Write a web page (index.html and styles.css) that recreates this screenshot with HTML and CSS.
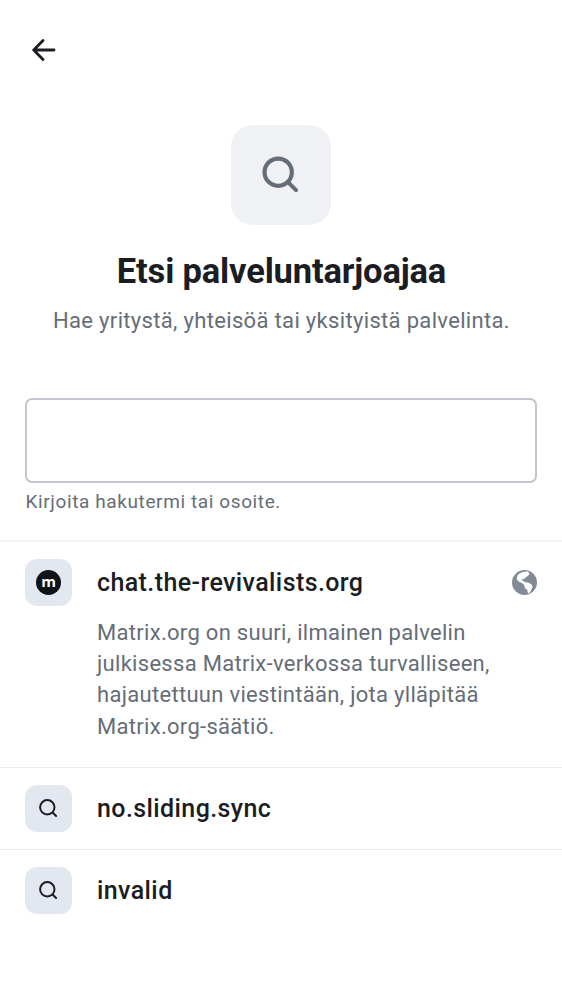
FILE: index.html
```html
<!DOCTYPE html>
<html lang="fi">
<head>
<meta charset="utf-8">
<title>Etsi palveluntarjoajaa</title>
<link rel="stylesheet" href="styles.css">
</head>
<body>
<header class="topbar">
<svg class="back" viewBox="0 0 24 24" fill="none" stroke="currentColor" stroke-width="2.8" stroke-linecap="round" stroke-linejoin="round"><path d="M22 12H2M11 2.600 1.700 12l9.300 9.400"/></svg>
</header>
<section class="hero">
<div class="hero-icon"><svg viewBox="0 0 40 40" fill="none" stroke="currentColor" stroke-width="4.300" stroke-linecap="round"><circle cx="16.600" cy="16.600" r="14"/><path d="m27.200 27.300 7.700 7.700"/></svg></div>
<h1 class="title">Etsi palveluntarjoajaa</h1>
<p class="subtitle">Hae yritystä, yhteisöä tai yksityistä palvelinta.</p>
</section>
<div class="field">
<input class="input" type="text" aria-label="Palvelin">
<p class="hint">Kirjoita hakutermi tai osoite.</p>
</div>
<main>
<article class="provider first">
<div class="badge"><span class="logo">m</span></div>
<div class="info">
<div class="name-row"><h2 class="name">chat.the-revivalists.org</h2>
<svg class="globe" viewBox="0 0 25 25"><circle cx="12.500" cy="12.500" r="12.500" fill="currentColor"/><path fill="#fff" d="M11.500 1.700 16 1.500l1.500 2-1.200 2.200-2.300 1.200-1.500 1.800-2.200.2-.2 1.800 2 .2.700 1.700 3.200-.3 3.500 2.100 1.200 2.600-1.300 2.300-1.200 3-2.200 1.300-.7-3.600-2.500-2-.4-3-2.600-2L6.600 11.500 4.800 9.300l.5-3.500 2.400-2.500z"/></svg></div>
<p class="description">Matrix.org on suuri, ilmainen palvelin julkisessa Matrix-verkossa turvalliseen, hajautettuun viestintään, jota ylläpitää Matrix.org-säätiö.</p>
</div>
</article>
<article class="provider">
<div class="badge"><svg class="search" viewBox="0 0 20 20" fill="none" stroke="currentColor" stroke-width="2" stroke-linecap="round"><circle cx="9.300" cy="8.300" r="7.200"/><path d="m14.600 13.500 3.500 3.500"/></svg></div>
<h2 class="name">no.sliding.sync</h2>
</article>
<article class="provider">
<div class="badge"><svg class="search" viewBox="0 0 20 20" fill="none" stroke="currentColor" stroke-width="2" stroke-linecap="round"><circle cx="9.300" cy="8.300" r="7.200"/><path d="m14.600 13.500 3.500 3.500"/></svg></div>
<h2 class="name">invalid</h2>
</article>
</main>
</body>
</html>
```
FILE: styles.css
```css
* { box-sizing: border-box; }
body { margin: 0; min-height: 1000px; background: #fff; color: #1b1d22; font-family: Roboto, sans-serif; }
h1, h2, p { margin: 0; }
svg { display: block; }
.topbar { height: 100px; padding: 38px 0 0 32px; }
.back { width: 24px; height: 24px; }
.hero { height: 298px; padding-top: 25px; display: flex; flex-direction: column; align-items: center; }
.hero-icon { width: 100px; height: 100px; border-radius: 22px; background: #f0f1f5; color: #656d77; display: grid; place-items: center; }
.hero-icon svg { width: 39px; height: 39px; }
.title { margin-top: 25px; padding-left: 1px; font-size: 34.5px; line-height: 42px; font-weight: 700; letter-spacing: -.16px; white-space: nowrap; }
.subtitle { margin-top: 13px; padding-left: 1px; font-size: 22px; line-height: 32px; letter-spacing: .33px; color: #656d77; white-space: nowrap; }
.field { height: 142px; padding: 0 25px; }
.input { display: block; width: 100%; height: 85px; border: 2px solid #c1c6d0; border-radius: 7px; background: #fff; padding: 0 20px; }
.hint { margin-top: 6px; padding-left: .5px; color: #656d77; font-size: 19px; line-height: 26px; letter-spacing: .61px; }
.provider { display: flex; gap: 25px; height: 82px; padding: 17px 25px 0; border-top: 1px solid #ebecf2; }
.first { height: 227px; border-top: 2px solid #f3f4f6; }
.badge { width: 47px; height: 47px; flex: none; border-radius: 12px; background: #e3e7f0; display: grid; place-items: center; }
.logo { display: grid; place-items: center; width: 25px; height: 25px; border-radius: 50%; background: #101317; color: #fff; font: 700 15px/22px "Open Sans", sans-serif; padding-bottom: 4px; }
.search { width: 20px; height: 20px; margin-right: 1px; }
.info { flex: 1; min-width: 0; }
.name-row { display: flex; justify-content: space-between; align-items: center; }
.name { font-size: 25px; line-height: 47px; font-weight: 500; letter-spacing: .4px; }
.globe { width: 25px; height: 25px; color: #818a95; }
.description { margin-top: 11px; width: 405px; color: #656d77; font-size: 22px; line-height: 31.2px; letter-spacing: .3px; }
```
